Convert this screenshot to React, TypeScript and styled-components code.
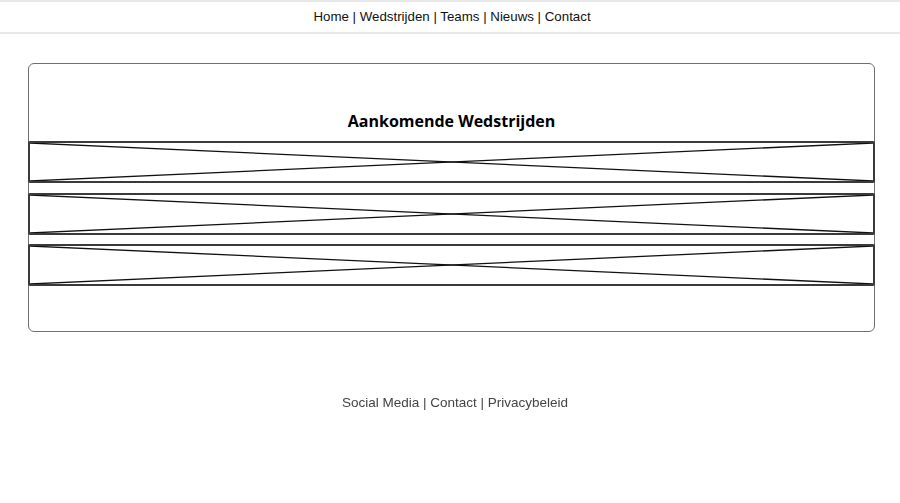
import styled, { createGlobalStyle } from 'styled-components';

const GlobalStyle = createGlobalStyle`
  * {
    box-sizing: border-box;
  }
  body {
    margin: 0;
    background: #fff;
    font-family: 'Liberation Sans', Arial, sans-serif;
    color: #111;
  }
`;

const matches = ['wedstrijd-1', 'wedstrijd-2', 'wedstrijd-3'];

function Placeholder() {
  return (
    <Slot>
      <svg width="100%" height="100%" viewBox="0 0 100 100" preserveAspectRatio="none">
        <line x1="0" y1="0" x2="100" y2="100" stroke="#111" strokeWidth="1.3" vectorEffect="non-scaling-stroke" />
        <line x1="0" y1="100" x2="100" y2="0" stroke="#111" strokeWidth="1.3" vectorEffect="non-scaling-stroke" />
      </svg>
    </Slot>
  );
}

export default function App() {
  return (
    <>
      <GlobalStyle />
      <Header>
        <Nav>Home | Wedstrijden | Teams | Nieuws | Contact</Nav>
      </Header>
      <Main>
        <Card>
          <Heading>Aankomende Wedstrijden</Heading>
          <List>
            {matches.map((m) => (
              <Placeholder key={m} />
            ))}
          </List>
        </Card>
      </Main>
      <Footer>Social Media | Contact | Privacybeleid</Footer>
    </>
  );
}

const Header = styled.header`
  border-top: 2px solid #e8e8e8;
  border-bottom: 2px solid #e8e8e8;
  height: 34px;
  display: flex;
  align-items: center;
  justify-content: center;
`;

const Nav = styled.nav`
  font-size: 13.3px;
  color: #111;
  margin-top: -1px;
  padding-left: 4px;
`;

const Main = styled.main`
  padding: 29px 25px 0 28px;
`;

const Card = styled.section`
  border: 1px solid #707070;
  border-radius: 6px;
  padding: 46px 0 45px;
`;

const Heading = styled.h2`
  margin: 0 0 9px;
  text-align: center;
  font-family: 'Open Sans', 'Noto Sans', sans-serif;
  font-size: 16px;
  font-weight: 700;
  line-height: 22px;
  color: #000;
`;

const List = styled.div`
  display: flex;
  flex-direction: column;
  gap: 9.5px;
`;

const Slot = styled.div`
  height: 42px;
  border: 2px solid #3a3a3a;
  border-radius: 2px;
  margin: 0 -1px;
  display: flex;

  svg {
    display: block;
  }
`;

const Footer = styled.footer`
  margin-top: 63px;
  padding-left: 10px;
  text-align: center;
  font-size: 13.5px;
  color: #444;
  filter: blur(0.4px);
`;
